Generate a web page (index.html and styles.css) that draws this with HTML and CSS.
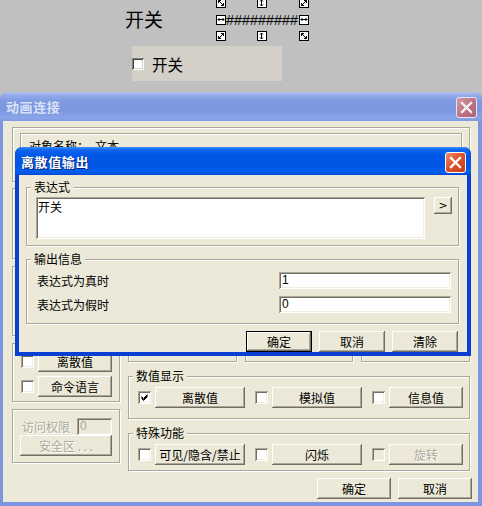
FILE: index.html
```html
<!DOCTYPE html>
<html lang="zh-CN">
<head>
<meta charset="utf-8">
<title>动画连接</title>
<link rel="stylesheet" href="styles.css">
</head>
<body>
<div class="desktop">
  <div class="cv-label">开关</div>

  <div class="handle hx1 hy1"><svg width="10" height="10" viewBox="0 0 10 10"><rect x="0.5" y="0.5" width="9" height="9" fill="#fff" stroke="#000"/><path d="M2.5 2.5L7.5 7.5M2.5 2.5h2.5M2.5 2.5v2.5M7.5 7.5h-2.5M7.5 7.5v-2.5" stroke="#000" fill="none"/></svg></div>
  <div class="handle hx2 hy1"><svg width="10" height="10" viewBox="0 0 10 10"><rect x="0.5" y="0.5" width="9" height="9" fill="#fff" stroke="#000"/><path d="M4.5 2V8M3 3.5L4.5 2L6 3.5M3 6.5L4.5 8L6 6.5" stroke="#000" fill="none"/></svg></div>
  <div class="handle hx3 hy1"><svg width="10" height="10" viewBox="0 0 10 10"><rect x="0.5" y="0.5" width="9" height="9" fill="#fff" stroke="#000"/><path d="M7.5 2.5L2.5 7.5M7.5 2.5h-2.5M7.5 2.5v2.5M2.5 7.5h2.5M2.5 7.5v-2.5" stroke="#000" fill="none"/></svg></div>
  <div class="handle hx1 hy2"><svg width="10" height="10" viewBox="0 0 10 10"><rect x="0.5" y="0.5" width="9" height="9" fill="#fff" stroke="#000"/><path d="M2 4.5H8M3.5 3L2 4.5L3.5 6M6.5 3L8 4.5L6.5 6" stroke="#000" fill="none"/></svg></div>
  <div class="hash">#########</div>
  <div class="handle hx3 hy2"><svg width="10" height="10" viewBox="0 0 10 10"><rect x="0.5" y="0.5" width="9" height="9" fill="#fff" stroke="#000"/><path d="M2 4.5H8M3.5 3L2 4.5L3.5 6M6.5 3L8 4.5L6.5 6" stroke="#000" fill="none"/></svg></div>
  <div class="handle hx1 hy3"><svg width="10" height="10" viewBox="0 0 10 10"><rect x="0.5" y="0.5" width="9" height="9" fill="#fff" stroke="#000"/><path d="M7.5 2.5L2.5 7.5M7.5 2.5h-2.5M7.5 2.5v2.5M2.5 7.5h2.5M2.5 7.5v-2.5" stroke="#000" fill="none"/></svg></div>
  <div class="handle hx2 hy3"><svg width="10" height="10" viewBox="0 0 10 10"><rect x="0.5" y="0.5" width="9" height="9" fill="#fff" stroke="#000"/><path d="M4.5 2V8M3 3.5L4.5 2L6 3.5M3 6.5L4.5 8L6 6.5" stroke="#000" fill="none"/></svg></div>
  <div class="handle hx3 hy3"><svg width="10" height="10" viewBox="0 0 10 10"><rect x="0.5" y="0.5" width="9" height="9" fill="#fff" stroke="#000"/><path d="M2.5 2.5L7.5 7.5M2.5 2.5h2.5M2.5 2.5v2.5M7.5 7.5h-2.5M7.5 7.5v-2.5" stroke="#000" fill="none"/></svg></div>

  <div class="chk-panel"><span class="panel-cb"></span><span>开关</span></div>

  <!-- 动画连接 window (inactive) -->
  <div class="win win1">
    <div class="titlebar tb-inactive">
      <span class="title title-inactive">动画连接</span>
      <span class="close close-inactive"><svg width="21" height="21" viewBox="0 0 21 21"><path d="M6 6L15 15M15 6L6 15" stroke="#f4f0f4" stroke-width="2.4" stroke-linecap="square"/></svg></span>
    </div>
    <div class="wbody">
      <div class="etched frame-top">
        <div class="etched objbox"><span>对象名称：</span><span class="objname">文本</span></div>
      </div>
      <div class="cols">
        <div class="lcol">
          <div class="etched gA"></div>
          <div class="etched gB"></div>
          <div class="etched gC">
            <div class="row"><span class="cb"></span><button class="btn w74">离散值</button></div>
            <div class="row"><span class="cb"></span><button class="btn w74">命令语言</button></div>
          </div>
          <div class="etched gD">
            <div class="row-acc"><span class="dis-text acc-label">访问权限</span><span class="inp inp-dis">0</span></div>
            <button class="btn w92 dis-text safe">安全区 . . .</button>
          </div>
        </div>
        <div class="rcol">
          <div class="etched r1"></div>
          <div class="r2"><div class="etched r2a"></div><div class="etched r2b"></div><div class="etched r2c"></div></div>
          <fieldset class="fs">
            <legend>数值显示</legend>
            <div class="opts opts-a">
              <div class="opt"><span class="cb"><svg width="13" height="13" viewBox="0 0 13 13"><path d="M3.5 5.5L5.5 7.5L9.5 3.5M3.5 6.5L5.5 8.5L9.5 4.5M3.5 7.5L5.5 9.5L9.5 5.5" stroke="#000" fill="none" stroke-width="1"/></svg></span><button class="btn w90">离散值</button></div>
              <div class="opt"><span class="cb"></span><button class="btn w90">模拟值</button></div>
              <div class="opt"><span class="cb"></span><button class="btn w74">信息值</button></div>
            </div>
          </fieldset>
          <fieldset class="fs">
            <legend>特殊功能</legend>
            <div class="opts opts-b">
              <div class="opt"><span class="cb"></span><button class="btn w90">可见/隐含/禁止</button></div>
              <div class="opt"><span class="cb"></span><button class="btn w90">闪烁</button></div>
              <div class="opt"><span class="cb cb-dis"></span><button class="btn w74 dis-text">旋转</button></div>
            </div>
          </fieldset>
        </div>
      </div>
      <div class="foot">
        <button class="btn w74">确定</button>
        <button class="btn w74">取消</button>
      </div>
    </div>
  </div>

  <!-- 离散值输出 window (active) -->
  <div class="win win2">
    <div class="titlebar tb-active">
      <span class="title">离散值输出</span>
      <span class="close close-active"><svg width="21" height="21" viewBox="0 0 21 21"><path d="M6 6L15 15M15 6L6 15" stroke="#fff" stroke-width="2.4" stroke-linecap="square"/></svg></span>
    </div>
    <div class="wbody2">
      <fieldset class="fs">
        <legend>表达式</legend>
        <div class="expr">
          <div class="ta">开关</div>
          <button class="btn arrow-btn">&gt;</button>
        </div>
      </fieldset>
      <fieldset class="fs fs-out">
        <legend>输出信息</legend>
        <div class="outs">
          <div class="out-row"><span>表达式为真时</span><span class="inp w172">1</span></div>
          <div class="out-row"><span>表达式为假时</span><span class="inp w172">0</span></div>
        </div>
      </fieldset>
      <div class="dlg-btns">
        <button class="btn btn-default w66">确定</button>
        <button class="btn w66">取消</button>
        <button class="btn w66">清除</button>
      </div>
    </div>
  </div>
</div>
</body>
</html>
```
FILE: styles.css
```css
* { box-sizing: border-box; }
html, body { margin: 0; padding: 0; }
body {
  width: 482px; height: 506px; overflow: hidden;
  background: #c0c0c0;
  font-family: "Noto Sans CJK SC", "Noto Sans", sans-serif;
  font-size: 12px; color: #000;
}
.desktop { position: relative; width: 482px; height: 506px; overflow: hidden; }

/* free canvas objects */
.cv-label { position: absolute; left: 125px; top: 9px; font-size: 19px; line-height: 20px; }
.handle { position: absolute; width: 10px; height: 10px; }
.handle svg { display: block; }
.hx1 { left: 216px; } .hx2 { left: 257px; } .hx3 { left: 299px; }
.hy1 { top: -2px; } .hy2 { top: 15px; } .hy3 { top: 31px; }
.hash {
  position: absolute; left: 226px; top: 12px;
  font-family: "Liberation Sans", Arial, sans-serif; font-size: 14.4px; line-height: 16px;
}
.chk-panel {
  position: absolute; left: 132px; top: 46px; width: 150px; height: 35px;
  background: #d4d0c8; display: flex; align-items: center; gap: 8px;
  font-size: 15.5px; line-height: 16px;
}
.panel-cb {
  width: 12px; height: 12px; background: #fff; flex: none;
  box-shadow: inset 1px 1px #808080, inset -1px -1px #fff, inset 2px 2px #404040, inset -2px -2px #d4d0c8;
}

/* windows */
.win { position: absolute; display: flex; flex-direction: column; border-radius: 7px 7px 0 0; }
.win1 { left: 0; top: 92px; width: 482px; height: 414px; background: #7b96df; padding: 0 4px 4px 3px; }
.win2 { left: 15px; top: 147px; width: 456px; height: 209px; background: #0a3fd4; padding: 0 4px 4px; }
.titlebar {
  display: flex; justify-content: space-between; align-items: flex-start;
  border-radius: 7px 7px 0 0; padding: 0 5px 0 6px; flex: none;
}
.tb-inactive {
  margin: 0 -4px 0 -3px; height: 29px;
  background: linear-gradient(#b4c4f0 0, #97acea 3px, #829ce3 8px, #7b96df 18px, #8aa4e8 26px, #7f9ae2 29px);
}
.tb-active {
  margin: 0 -4px; height: 28px;
  background: linear-gradient(#3d8ff9 0, #0f63f0 3px, #0058e6 8px, #0054e3 18px, #0260ee 25px, #0046d0 28px);
}
.title {
  margin-top: 7px; font-weight: 700; font-size: 13px; letter-spacing: 0.6px; line-height: 16px; color: #fff;
  text-shadow: 1px 1px 0 #0a1f78;
}
.title-inactive { color: #d8e2f8; text-shadow: none; }
.close {
  margin-top: 5px; width: 21px; height: 21px; border-radius: 3px; flex: none;
  border: 1px solid #fff; display: block;
}
.close svg { display: block; margin: -1px; }
.close-active { background: linear-gradient(135deg, #f08a6c 0%, #e0532d 45%, #c43a17 100%); }
.close-inactive { background: linear-gradient(135deg, #d39aa8 0%, #bf7484 50%, #ad6070 100%); border-color: #e3e6f4; }

/* window 1 body */
.wbody {
  flex: 1; background: #ece9d8; padding: 6px 8px 3px 9px;
  display: flex; flex-direction: column;
}
.etched { border: 1px solid #aca899; box-shadow: inset 1px 1px #fff, 1px 1px #fff; }
.frame-top { height: 55px; padding: 5px 7px; flex: none; }
.objbox { height: 38px; padding: 5px 8px; line-height: 14px; }
.objname { margin-left: 6px; }
.cols { display: flex; gap: 8px; margin-top: 6px; }
.lcol { width: 108px; display: flex; flex-direction: column; gap: 7px; }
.rcol { width: 342px; display: flex; flex-direction: column; gap: 8px; }
.gA { height: 71px; }
.gB { height: 70px; }
.gC { padding: 7px 7px 4px 8px; display: flex; flex-direction: column; gap: 4px; }
.row { display: flex; align-items: center; gap: 4px; }
.gD { padding: 8px 7px 6px 7px; }
.row-acc { display: flex; align-items: center; justify-content: space-between; }
.acc-label { margin-left: 2px; }
.safe { margin-top: 8px; }
.r1 { height: 102px; }
.r2 { height: 64px; display: flex; gap: 8px; }
.r2a, .r2c { width: 109px; }
.r2b { width: 108px; }

/* fieldsets */
.fs {
  margin: 0; padding: 0; min-width: 0;
  border: 1px solid #aca899; box-shadow: inset 1px 1px #fff, 1px 1px #fff;
}
.fs legend {
  padding: 0 3px; margin-left: 4px; line-height: 12px; font-size: 12px; background: #ece9d8;
}
.opts { display: flex; gap: 10px; padding: 5px 6px 10px 9px; }
.opts-b { padding-bottom: 5px; }
.opt { display: flex; align-items: center; gap: 4px; }

/* controls */
.btn {
  height: 21px; padding: 0; border: none; margin: 0;
  background: #ece9d8; color: #000; font: inherit; line-height: 14px;
  box-shadow: inset -1px -1px #716f64, inset 1px 1px #fff, inset -2px -2px #aca899;
  display: flex; align-items: center; justify-content: center; white-space: nowrap; flex: none;
}
.btn-default {
  box-shadow: inset 0 0 0 1px #000, inset -2px -2px #716f64, inset 2px 2px #fff, inset -3px -3px #aca899;
}
.w66 { width: 66px; } .w74 { width: 74px; } .w90 { width: 90px; } .w92 { width: 92px; }
.cb {
  width: 13px; height: 13px; background: #fff; flex: none; display: block;
  box-shadow: inset 1px 1px #aca899, inset -1px -1px #fff, inset 2px 2px #716f64, inset -2px -2px #f1efe2;
}
.cb svg { display: block; }
.cb-dis { background: #ece9d8; }
.dis-text { color: #aca899; text-shadow: 1px 1px 0 #fff; }
.inp {
  display: block; height: 17px; background: #fff; padding: 2px 3px; line-height: 13px;
  box-shadow: inset 1px 1px #aca899, inset -1px -1px #fff, inset 2px 2px #716f64, inset -2px -2px #f1efe2;
  font-family: "Liberation Sans", Arial, sans-serif; font-size: 12px;
}
.inp-dis { width: 35px; background: #ece9d8; color: #aca899; }
.w172 { width: 172px; }

.foot { display: flex; justify-content: flex-end; gap: 7px; margin-top: 7px; margin-right: -2px; }

/* window 2 body */
.wbody2 { flex: 1; background: #ece9d8; padding: 6px 8px 0 7px; display: flex; flex-direction: column; }
.expr { display: flex; align-items: flex-start; gap: 9px; padding: 4px 6px 6px 9px; }
.ta {
  flex: 1; height: 42px; background: #fff; padding: 3px 2px; line-height: 13px;
  box-shadow: inset 1px 1px #aca899, inset -1px -1px #fff, inset 2px 2px #716f64, inset -2px -2px #f1efe2;
}
.arrow-btn { width: 18px; height: 17px; font-family: "DejaVu Sans", sans-serif; font-size: 11px; }
.fs-out { margin-top: 7px; }
.outs { padding: 7px 7px 10px 10px; display: flex; flex-direction: column; gap: 7px; }
.out-row { display: flex; align-items: center; justify-content: space-between; }
.dlg-btns { display: flex; justify-content: flex-end; gap: 7px; margin-top: 7px; padding-right: 1px; }
```
